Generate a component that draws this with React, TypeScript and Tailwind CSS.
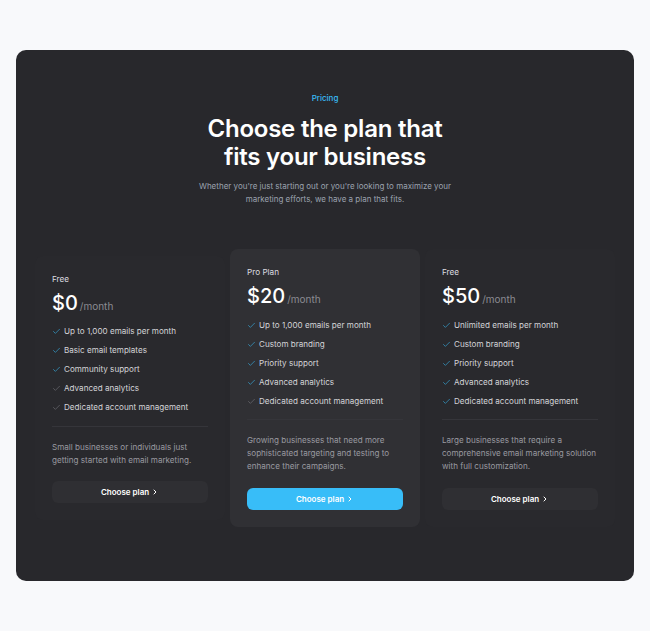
import { Check, ChevronRight } from 'lucide-react'

type Plan = {
  label: string
  price: string
  features: { text: string; on: boolean }[]
  description: string
  featured?: boolean
}

const plans: Plan[] = [
  {
    label: 'Free',
    price: '$0',
    features: [
      { text: 'Up to 1,000 emails per month', on: true },
      { text: 'Basic email templates', on: true },
      { text: 'Community support', on: true },
      { text: 'Advanced analytics', on: false },
      { text: 'Dedicated account management', on: false },
    ],
    description: 'Small businesses or individuals just getting started with email marketing.',
  },
  {
    label: 'Pro Plan',
    price: '$20',
    features: [
      { text: 'Up to 1,000 emails per month', on: true },
      { text: 'Custom branding', on: true },
      { text: 'Priority support', on: true },
      { text: 'Advanced analytics', on: true },
      { text: 'Dedicated account management', on: false },
    ],
    description: 'Growing businesses that need more sophisticated targeting and testing to enhance their campaigns.',
    featured: true,
  },
  {
    label: 'Free',
    price: '$50',
    features: [
      { text: 'Unlimited emails per month', on: true },
      { text: 'Custom branding', on: true },
      { text: 'Priority support', on: true },
      { text: 'Advanced analytics', on: true },
      { text: 'Dedicated account management', on: true },
    ],
    description: 'Large businesses that require a comprehensive email marketing solution with full customization.',
  },
]

function PlanCard({ plan }: { plan: Plan }) {
  return (
    <div
      className={`flex flex-col rounded-lg px-[17px] pt-[17px] pb-[17px] ${
        plan.featured ? 'bg-[#303034]' : 'bg-[#29292d]'
      }`}
    >
      <p className="text-[8.2px] leading-[12px] text-[#dcdce0]">{plan.label}</p>
      <div className="mt-[6px] flex items-baseline gap-[2px] h-[24px]">
        <span className="text-[20px] leading-[24px] font-medium text-white">{plan.price}</span>
        <span className="text-[10px] text-[#8b8b92]">/month</span>
      </div>

      <ul className="mt-[10.5px] flex flex-col gap-[6px]">
        {plan.features.map((f) => (
          <li key={f.text} className="flex items-center gap-[3px] text-[8.1px] leading-[13px] text-[#d4d4d8]">
            <Check
              className={`h-[9px] w-[9px] ${f.on ? 'text-[#38bdf8]' : 'text-[#7a7a80]'}`}
              strokeWidth={1.5}
            />
            {f.text}
          </li>
        ))}
      </ul>

      <div className="mt-[11.5px] h-px bg-[#35353a]" />

      <p className="mt-[14px] text-[8.1px] leading-[13px] text-[#9a9aa0]">{plan.description}</p>

      <button
        className={`mt-[14.5px] h-[22px] w-full inline-flex items-center justify-center gap-[2px] rounded-md text-[8px] font-semibold ${
          plan.featured ? 'bg-[#38bdf8] text-white' : 'bg-[#2f2f33] text-white'
        }`}
      >
        Choose plan
        <ChevronRight className="h-[8px] w-[8px]" strokeWidth={3} />
      </button>
    </div>
  )
}

export default function App() {
  return (
    <div className="min-h-screen bg-[#f8f9fb] pt-[50px] px-4 font-['Inter',sans-serif]">
      <div className="rounded-[10px] bg-[#28282c] px-[19px] pt-[42px] pb-[54px]">
        <div className="flex flex-col items-center text-center">
          <p className="text-[8px] leading-[12px] font-medium text-[#38bdf8]">Pricing</p>
          <h1 className="mt-[11px] text-[24px] leading-[28px] font-semibold tracking-[-0.01em] text-white">
            Choose the plan that
            <br />
            fits your business
          </h1>
          <p className="mt-[8.5px] max-w-[260px] text-[8px] leading-[13px] text-[#9ca3af]">
            Whether you're just starting out or you're looking to maximize your marketing efforts, we have a plan that fits.
          </p>
        </div>

        <div className="mt-[43.5px] grid grid-cols-3 gap-[5px] items-center">
          {plans.map((p, i) => (
            <PlanCard key={i} plan={p} />
          ))}
        </div>
      </div>
    </div>
  )
}
